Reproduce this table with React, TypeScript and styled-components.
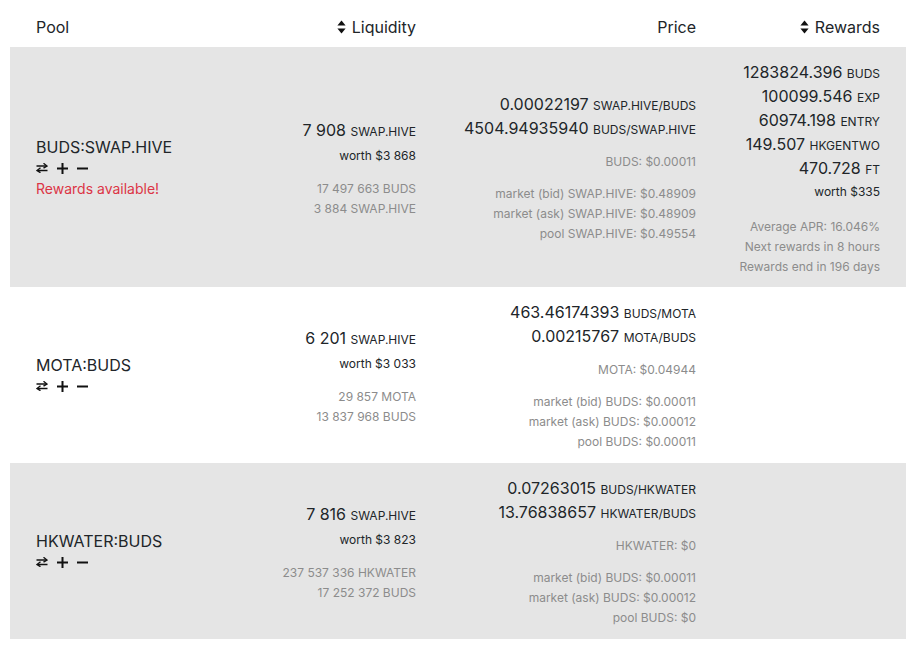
import React from "react";
import styled, { createGlobalStyle } from "styled-components";

const Global = createGlobalStyle`
  html, body { margin: 0; padding: 0; background: #fff; }
  body { font-family: Inter, "Noto Sans", sans-serif; color: #212529; }
`;

const Page = styled.div`
  padding: 0 11px 8px 10px;
`;

const Grid = styled.div<{ $shade?: boolean; $h: number }>`
  display: grid;
  grid-template-columns: 220px 212px 280px 184px;
  align-items: center;
  min-height: ${(p) => p.$h}px;
  background: ${(p) => (p.$shade ? "#e5e5e5" : "#fff")};
`;

const HeadCell = styled.div<{ $right?: boolean; $first?: boolean }>`
  font-size: 16px;
  line-height: 24px;
  color: #212529;
  padding: 7px 26px 0 ${(p) => (p.$first ? "26px" : "16px")};
  display: flex;
  align-items: center;
  justify-content: ${(p) => (p.$right ? "flex-end" : "flex-start")};
  gap: 6px;
`;

const Cell = styled.div<{ $first?: boolean }>`
  text-align: ${(p) => (p.$first ? "left" : "right")};
  padding: 12px 26px 10px ${(p) => (p.$first ? "26px" : "8px")};
  white-space: nowrap;
`;

const PoolName = styled.div`
  font-size: 16px;
  line-height: 20px;
`;

const Icons = styled.div`
  display: flex;
  align-items: center;
  gap: 9px;
  height: 22px;
`;

const RewardsNote = styled.div`
  font-size: 14px;
  line-height: 20px;
  color: #dc3545;
`;

const Main = styled.div`
  font-size: 16px;
  line-height: 24px;
`;

const Unit = styled.span`
  font-size: 12px;
  line-height: 0;
`;

const Worth = styled.div<{ $gap?: number }>`
  font-size: 12px;
  line-height: 24px;
  margin-top: ${(p) => p.$gap ?? 0}px;
`;

const Muted = styled.div<{ $gap?: number }>`
  font-size: 12px;
  line-height: 20px;
  color: #8c8c8c;
  margin-top: ${(p) => p.$gap ?? 0}px;
`;

const Sort = () => (
  <svg width="9" height="14" viewBox="0 0 9 14">
    <path d="M4.5 0.5 L8.6 5.6 H0.4 Z" fill="#111" />
    <path d="M4.5 13.5 L8.6 8.4 H0.4 Z" fill="#111" />
  </svg>
);

const Exchange = () => (
  <svg width="12" height="10" viewBox="0 0 12 10">
    <path d="M0.5 3 H10" stroke="#111" strokeWidth="1.5" fill="none" />
    <path d="M7.5 0.3 L11 3 L7.5 5.2" stroke="#111" strokeWidth="1.4" fill="none" />
    <path d="M11.5 7.5 H2" stroke="#111" strokeWidth="1.5" fill="none" />
    <path d="M4.5 4.8 L1 7.5 L4.5 9.7" stroke="#111" strokeWidth="1.4" fill="none" />
  </svg>
);

const Plus = () => (
  <svg width="11" height="11" viewBox="0 0 11 11">
    <path d="M5.5 0 V11 M0 5.5 H11" stroke="#111" strokeWidth="2" />
  </svg>
);

const Minus = () => (
  <svg width="11" height="11" viewBox="0 0 11 11">
    <path d="M0 5.5 H11" stroke="#111" strokeWidth="2" />
  </svg>
);

type Row = {
  name: string;
  rewardsAvail?: boolean;
  liq: [string, string];
  worth: string;
  reserves: string[];
  prices: [string, string][];
  tokenPrice: string;
  market: string[];
  rewards?: { amounts: [string, string][]; worth: string; info: string[] };
  shade?: boolean;
  h: number;
};

const rows: Row[] = [
  {
    name: "BUDS:SWAP.HIVE",
    rewardsAvail: true,
    liq: ["7 908", "SWAP.HIVE"],
    worth: "worth $3 868",
    reserves: ["17 497 663 BUDS", "3 884 SWAP.HIVE"],
    prices: [
      ["0.00022197", "SWAP.HIVE/BUDS"],
      ["4504.94935940", "BUDS/SWAP.HIVE"],
    ],
    tokenPrice: "BUDS: $0.00011",
    market: [
      "market (bid) SWAP.HIVE: $0.48909",
      "market (ask) SWAP.HIVE: $0.48909",
      "pool SWAP.HIVE: $0.49554",
    ],
    rewards: {
      amounts: [
        ["1283824.396", "BUDS"],
        ["100099.546", "EXP"],
        ["60974.198", "ENTRY"],
        ["149.507", "HKGENTWO"],
        ["470.728", "FT"],
      ],
      worth: "worth $335",
      info: ["Average APR: 16.046%", "Next rewards in 8 hours", "Rewards end in 196 days"],
    },
    shade: true,
    h: 240,
  },
  {
    name: "MOTA:BUDS",
    liq: ["6 201", "SWAP.HIVE"],
    worth: "worth $3 033",
    reserves: ["29 857 MOTA", "13 837 968 BUDS"],
    prices: [
      ["463.46174393", "BUDS/MOTA"],
      ["0.00215767", "MOTA/BUDS"],
    ],
    tokenPrice: "MOTA: $0.04944",
    market: [
      "market (bid) BUDS: $0.00011",
      "market (ask) BUDS: $0.00012",
      "pool BUDS: $0.00011",
    ],
    h: 176,
  },
  {
    name: "HKWATER:BUDS",
    liq: ["7 816", "SWAP.HIVE"],
    worth: "worth $3 823",
    reserves: ["237 537 336 HKWATER", "17 252 372 BUDS"],
    prices: [
      ["0.07263015", "BUDS/HKWATER"],
      ["13.76838657", "HKWATER/BUDS"],
    ],
    tokenPrice: "HKWATER: $0",
    market: [
      "market (bid) BUDS: $0.00011",
      "market (ask) BUDS: $0.00012",
      "pool BUDS: $0",
    ],
    shade: true,
    h: 176,
  },
];

export default function App() {
  return (
    <Page>
      <Global />
      <Grid $h={47}>
        <HeadCell $first>Pool</HeadCell>
        <HeadCell $right>
          <Sort />
          Liquidity
        </HeadCell>
        <HeadCell $right>Price</HeadCell>
        <HeadCell $right>
          <Sort />
          Rewards
        </HeadCell>
      </Grid>
      {rows.map((r) => (
        <Grid key={r.name} $shade={r.shade} $h={r.h}>
          <Cell $first>
            <PoolName>{r.name}</PoolName>
            <Icons>
              <Exchange />
              <Plus />
              <Minus />
            </Icons>
            {r.rewardsAvail && <RewardsNote>Rewards available!</RewardsNote>}
          </Cell>
          <Cell>
            <Main>
              {r.liq[0]} <Unit>{r.liq[1]}</Unit>
            </Main>
            <Worth $gap={2}>{r.worth}</Worth>
            {r.reserves.map((t, i) => (
              <Muted key={t} $gap={i === 0 ? 11 : 0}>
                {t}
              </Muted>
            ))}
          </Cell>
          <Cell>
            {r.prices.map(([n, u]) => (
              <Main key={u}>
                {n} <Unit>{u}</Unit>
              </Main>
            ))}
            <Muted $gap={12}>{r.tokenPrice}</Muted>
            {r.market.map((t, i) => (
              <Muted key={t} $gap={i === 0 ? 12 : 0}>
                {t}
              </Muted>
            ))}
          </Cell>
          <Cell>
            {r.rewards && (
              <>
                {r.rewards.amounts.map(([n, u]) => (
                  <Main key={u}>
                    {n} <Unit>{u}</Unit>
                  </Main>
                ))}
                <Worth>{r.rewards.worth}</Worth>
                {r.rewards.info.map((t, i) => (
                  <Muted key={t} $gap={i === 0 ? 13 : 0}>
                    {t}
                  </Muted>
                ))}
              </>
            )}
          </Cell>
        </Grid>
      ))}
    </Page>
  );
}
